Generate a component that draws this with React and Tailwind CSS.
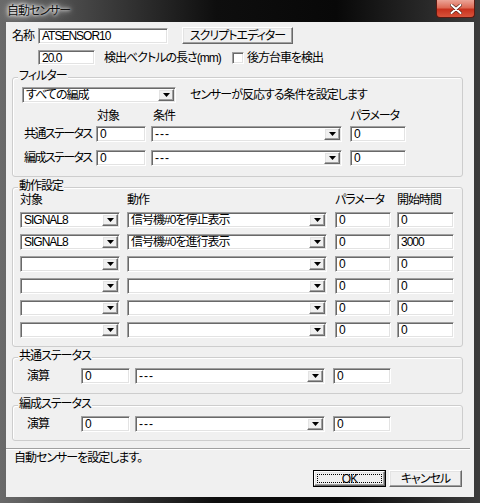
import React from "react";

const SUNKEN =
  "border border-t-[#a0a0a0] border-l-[#a0a0a0] border-b-white border-r-white bg-white shadow-[inset_1px_1px_0_#696969,inset_-1px_-1px_0_#e3e3e3]";
const RAISED =
  "border border-t-white border-l-white border-b-[#696969] border-r-[#696969] bg-[#f0f0f0] shadow-[inset_-1px_-1px_0_#a0a0a0,inset_1px_1px_0_#e3e3e3]";

const DASHES = <span className="tracking-[1px]">---</span>;

function TextBox({ className = "", value = "" }) {
  return (
    <div className={`flex shrink-0 items-center overflow-hidden pl-[3px] leading-none ${SUNKEN} ${className}`}>
      {value}
    </div>
  );
}

function ComboBox({ className = "", value = "" }) {
  return (
    <div className={`flex shrink-0 items-stretch p-[1px] ${SUNKEN} ${className}`}>
      <div className="flex flex-1 items-center overflow-hidden pl-[2px] leading-none">{value}</div>
      <div className={`flex w-[16px] items-center justify-center ${RAISED}`}>
        <svg width="7" height="4" viewBox="0 0 7 4">
          <polygon points="0,0 7,0 3.5,4" fill="#000" />
        </svg>
      </div>
    </div>
  );
}

function Button({ className = "", children, isDefault }) {
  if (isDefault) {
    return (
      <div className={`shrink-0 border border-black ${className}`}>
        <div className={`flex h-full items-center justify-center p-[2px] ${RAISED}`}>
          <div className="flex h-full w-full items-center justify-center border border-dotted border-black leading-none">
            {children}
          </div>
        </div>
      </div>
    );
  }
  return (
    <div className={`flex shrink-0 items-center justify-center leading-none ${RAISED} ${className}`}>{children}</div>
  );
}

function Group({ title, className = "", children }) {
  return (
    <div className={`ml-[6px] w-[451px] rounded-[3px] border border-[#cdcdcd] shadow-[inset_1px_1px_0_#ffffff] ${className}`}>
      <div className="-mt-[9px] ml-[5px] h-[14px] w-fit bg-[#f0f0f0] px-[1px] leading-[14px]">{title}</div>
      {children}
    </div>
  );
}

const actions = [
  { target: "SIGNAL8", action: "信号機#0を停止表示", param: "0", start: "0" },
  { target: "SIGNAL8", action: "信号機#0を進行表示", param: "0", start: "3000" },
  { target: "", action: "", param: "0", start: "0" },
  { target: "", action: "", param: "0", start: "0" },
  { target: "", action: "", param: "0", start: "0" },
  { target: "", action: "", param: "0", start: "0" },
];

export default function App() {
  return (
    <div className="h-[503px] w-[480px] overflow-hidden whitespace-nowrap bg-[linear-gradient(90deg,#6a6a6a_0%,#404040_20%,#0e0e0e_45%,#080808_70%,#3c3c3c_100%)] font-['Liberation_Sans','Noto_Sans_CJK_JP',sans-serif] text-[12px] tracking-[-1px] text-black [font-feature-settings:'palt']">
      {/* title bar */}
      <div className="flex h-[22px] items-start justify-between">
        <div className="pl-[7px] pt-[4px] leading-[14px] text-[#111] [text-shadow:0_0_3px_#fff,0_0_5px_#fff,0_0_8px_#fff]">
          自動センサー
        </div>
        <div className="mr-[5px] flex h-[18px] w-[39px] items-center justify-center rounded-b-[4px] border border-t-0 border-[#5a1a12] bg-[linear-gradient(180deg,#eba497_0%,#dd6a55_45%,#c8321e_55%,#d8533b_100%)]">
          <svg width="12" height="10" viewBox="0 0 12 10">
            <path d="M1.5 1 L10.5 9 M10.5 1 L1.5 9" stroke="#4a1a10" strokeWidth="3.2" strokeLinecap="round" />
            <path d="M1.5 1 L10.5 9 M10.5 1 L1.5 9" stroke="#ffffff" strokeWidth="2" strokeLinecap="round" />
          </svg>
        </div>
      </div>

      {/* client area */}
      <div className="mx-[6px] flex h-[475px] flex-col bg-[#f0f0f0]">
        <div className="mt-[5px] flex h-[17px] items-center">
          <span className="ml-[6px] w-[26px] shrink-0">名称</span>
          <TextBox className="h-[16px] w-[130px]" value="ATSENSOR10" />
          <Button className="ml-[14px] h-[17px] w-[111px]">スクリプトエディター</Button>
        </div>

        <div className="mt-[6px] flex h-[15px] items-center">
          <TextBox className="ml-[32px] h-[15px] w-[57px]" value="20.0" />
          <span className="ml-[9px] w-[128px] shrink-0">検出ベクトルの長さ(mm)</span>
          <div className={`h-[12px] w-[12px] shrink-0 ${SUNKEN}`} />
          <span className="ml-[3px]">後方台車を検出</span>
        </div>

        <Group title="フィルター" className="mt-[12px] h-[100px]">
          <div className="mt-[4px] flex h-[16px] items-center">
            <ComboBox className="ml-[9px] h-[16px] w-[154px]" value="すべての編成" />
            <span className="ml-[14px]">センサーが反応する条件を設定します</span>
          </div>
          <div className="mt-[6px] flex h-[14px] items-center">
            <span className="ml-[84px] w-[56px] shrink-0">対象</span>
            <span className="w-[197px] shrink-0">条件</span>
            <span>パラメータ</span>
          </div>
          {["共通ステータス", "編成ステータス"].map((label, i) => (
            <div key={label} className={`flex h-[16px] items-center ${i === 0 ? "mt-[3px]" : "mt-[8px]"}`}>
              <span className="ml-[11px] w-[72px] shrink-0 tracking-[-1.6px]">{label}</span>
              <TextBox className="h-[16px] w-[50px]" value="0" />
              <ComboBox className="ml-[5px] h-[16px] w-[191px]" value={DASHES} />
              <TextBox className="ml-[8px] h-[16px] w-[56px]" value="0" />
            </div>
          ))}
        </Group>

        <Group title="動作設定" className="mt-[10px] h-[160px]">
          <div className="flex h-[14px] items-center">
            <span className="ml-[7px] w-[107px] shrink-0">対象</span>
            <span className="w-[208px] shrink-0">動作</span>
            <span className="w-[62px] shrink-0">パラメータ</span>
            <span>開始時間</span>
          </div>
          {actions.map((a, i) => (
            <div key={i} className={`flex h-[16px] items-center ${i === 0 ? "mt-[5px]" : "mt-[6px]"}`}>
              <ComboBox className="ml-[7px] h-[16px] w-[100px]" value={a.target} />
              <ComboBox className="ml-[7px] h-[16px] w-[200px]" value={a.action} />
              <TextBox className="ml-[8px] h-[16px] w-[56px]" value={a.param} />
              <TextBox className="ml-[6px] h-[16px] w-[57px]" value={a.start} />
            </div>
          ))}
        </Group>

        <Group title="共通ステータス" className="mt-[10px] h-[37px]">
          <div className="mt-[5px] flex h-[16px] items-center">
            <span className="ml-[14px] w-[54px] shrink-0">演算</span>
            <TextBox className="h-[16px] w-[49px]" value="0" />
            <ComboBox className="ml-[5px] h-[16px] w-[190px]" value={DASHES} />
            <TextBox className="ml-[8px] h-[16px] w-[58px]" value="0" />
          </div>
        </Group>

        <Group title="編成ステータス" className="mt-[11px] h-[36px]">
          <div className="mt-[5px] flex h-[16px] items-center">
            <span className="ml-[14px] w-[54px] shrink-0">演算</span>
            <TextBox className="h-[16px] w-[49px]" value="0" />
            <ComboBox className="ml-[5px] h-[16px] w-[190px]" value={DASHES} />
            <TextBox className="ml-[8px] h-[16px] w-[58px]" value="0" />
          </div>
        </Group>

        <div className="mt-[7px] h-[2px] w-[464px] border-t border-b border-t-[#a0a0a0] border-b-white" />

        <div className="mt-[1px] h-[14px] pl-[8px] leading-[14px]">自動センサーを設定します。</div>

        <div className="mt-[5px] flex h-[17px]">
          <Button isDefault className="ml-[307px] h-[17px] w-[73px]">
            OK
          </Button>
          <Button className="ml-[3px] h-[17px] w-[73px]">キャンセル</Button>
        </div>
      </div>
    </div>
  );
}
